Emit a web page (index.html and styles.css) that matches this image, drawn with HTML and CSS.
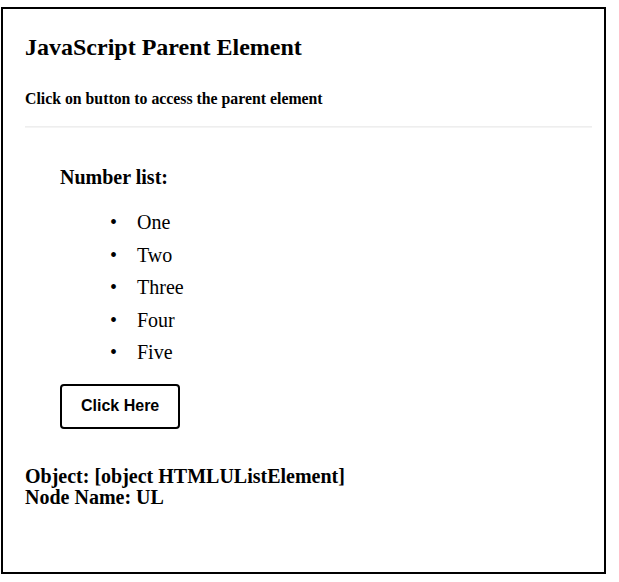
FILE: index.html
```html
<!DOCTYPE html>
<html lang="en">
<head>
    <meta charset="UTF-8">
    <meta name="viewport" content="width=device-width, initial-scale=1.0">
    <title>JavaScript Parent Element</title>
    <link rel="stylesheet" href="styles.css">
</head>
<body>
    <div class="frame">
        <h2 class="title">JavaScript Parent Element</h2>
        <p class="subtitle">Click on button to access the parent element</p>
        <hr class="divider">

        <div class="demo">
            <p class="list-label">Number list:</p>
            <ul class="numbers" id="numbers">
                <li id="first">One</li>
                <li>Two</li>
                <li>Three</li>
                <li>Four</li>
                <li>Five</li>
            </ul>
            <button class="click-button" onclick="showParent()">Click Here</button>
        </div>

        <div class="result" id="result">
            Object: [object HTMLUListElement]<br>
            Node Name: UL
        </div>
    </div>

    <script>
        function showParent() {
            const parent = document.getElementById('first').parentElement;
            document.getElementById('result').innerHTML =
                'Object: ' + parent + '<br>Node Name: ' + parent.nodeName;
        }
    </script>
</body>
</html>
```

FILE: styles.css
```css
body {
    margin: 0;
    padding: 0;
    font-family: "Liberation Serif", "Times New Roman", serif;
    color: #000;
    background: #fff;
}

.frame {
    width: 567px;
    height: 563px;
    margin: 7px 0 0 1px;
    padding: 0 12px 0 22px;
    border: 2px solid #000;
}

.title {
    margin: 25px 0 0;
    font-size: 24px;
    line-height: 27px;
    font-weight: bold;
}

.subtitle {
    margin: 29px 0 0;
    font-size: 15.8px;
    line-height: 18px;
    font-weight: bold;
}

.divider {
    margin: 18px 0 0;
    border: 0;
    border-top: 1px solid #eee;
    border-bottom: 1px solid #f4f4f4;
}

/* リスト部分 */
.demo {
    padding-left: 35px;
}

.list-label {
    margin: 38px 0 0;
    font-size: 20px;
    line-height: 23px;
    font-weight: bold;
}

.numbers {
    margin: 17px 0 0;
    padding-left: 77px;
    font-size: 20px;
    line-height: 32.5px;
    list-style-type: "\2022\2003";
}

.click-button {
    margin-top: 15px;
    padding: 11px 19px;
    height: 45px;
    background: #fff;
    border: 2px solid #000;
    border-radius: 4px;
    font-family: "Liberation Sans", Arial, sans-serif;
    font-size: 16px;
    font-weight: bold;
    color: #000;
    cursor: pointer;
}

.result {
    margin-top: 37px;
    font-size: 20px;
    line-height: 21px;
    font-weight: bold;
}
```
